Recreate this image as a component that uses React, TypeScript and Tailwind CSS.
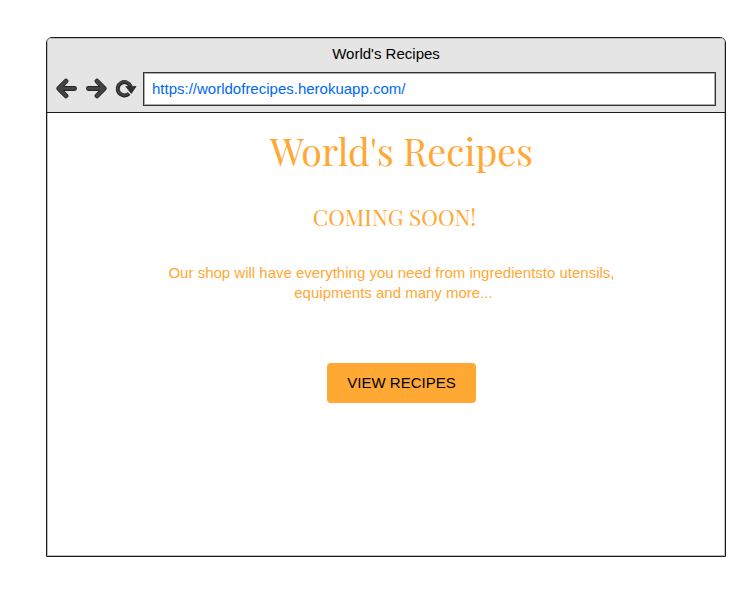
function ArrowIcon({ flipped = false }: { flipped?: boolean }) {
  return (
    <svg viewBox="0 0 22 22" className={flipped ? "h-[22px] w-[22px] -scale-x-100" : "h-[22px] w-[22px]"} fill="none" strokeLinecap="round" strokeLinejoin="round">
      <path d="M10 3.1 2.8 10.5l7.2 7.4M3.8 10.5h14.8" stroke="#252527" strokeWidth="4.8" />
      <path d="M10 3.1 2.8 10.5l7.2 7.4M3.8 10.5h14.8" stroke="#434345" strokeWidth="3.2" />
    </svg>
  );
}

function ReloadIcon() {
  return (
    <svg viewBox="0 0 22 20" className="h-5 w-[22px]" fill="none">
      <path d="M14.1 14.6A6.7 6.7 0 1 1 15.7 7.4" stroke="#252527" strokeWidth="4" />
      <path d="M13.7 14.2A6.7 6.7 0 1 1 15.7 7.4" stroke="#434345" strokeWidth="2.2" />
      <path d="M10.8 7.4h10.2l-4.7 7z" fill="#303032" stroke="#252527" strokeWidth=".8" strokeLinejoin="round" />
    </svg>
  );
}

export default function App() {
  return (
    <div className="h-[611px] w-[754px] bg-white pl-[46px] pt-[37px] font-['Liberation_Sans',Arial,sans-serif] text-[15px] leading-5">
      <main className="flex h-[520px] w-[680px] flex-col overflow-hidden rounded-t-[6px] border border-[#1c1c1e] bg-white shadow-[inset_-1px_-1px_0_#bdbdbd,inset_1px_0_0_#bdbdbd]">
        <header className="h-[75px] shrink-0 border-b border-[#1c1c1e] bg-[#e5e5e5] shadow-[inset_0_1px_0_#b8b8b8,inset_1px_0_0_#b8b8b8,inset_-1px_0_0_#b8b8b8]">
          <h1 className="pt-[6px] text-center text-black">World's Recipes</h1>
          <div className="mt-2 flex h-[34px] items-center pl-[9px]">
            <ArrowIcon />
            <span className="ml-[7px] flex"><ArrowIcon flipped /></span>
            <span className="ml-[8px] flex"><ReloadIcon /></span>
            <div className="ml-[6px] flex h-[34px] w-[573px] items-center border border-[#333335] bg-white pl-2 text-[#0068f0] shadow-[inset_0_0_0_1px_#aaaaaa]">
              https://worldofrecipes.herokuapp.com/
            </div>
          </div>
        </header>
        <section className="flex flex-col items-center text-[#ffa834]">
          <h2 className="mt-[9px] h-14 whitespace-nowrap pl-[31px] font-['Playfair_Display',serif] text-[37.5px] leading-[56px]">World's Recipes</h2>
          <h3 className="mt-[23px] h-8 whitespace-nowrap pl-[17px] font-['Playfair_Display',serif] text-[22.5px] leading-8">COMING SOON!</h3>
          <p className="mt-[30px] pl-[11px] text-center">
            Our shop will have everything you need from ingredientsto utensils,<br /><span className="pl-[4px]">equipments and many more...</span>
          </p>
          <button className="ml-[30px] mt-[60px] h-10 w-[149px] rounded bg-[#ffa834] pl-px text-black">VIEW RECIPES</button>
        </section>
      </main>
    </div>
  );
}
